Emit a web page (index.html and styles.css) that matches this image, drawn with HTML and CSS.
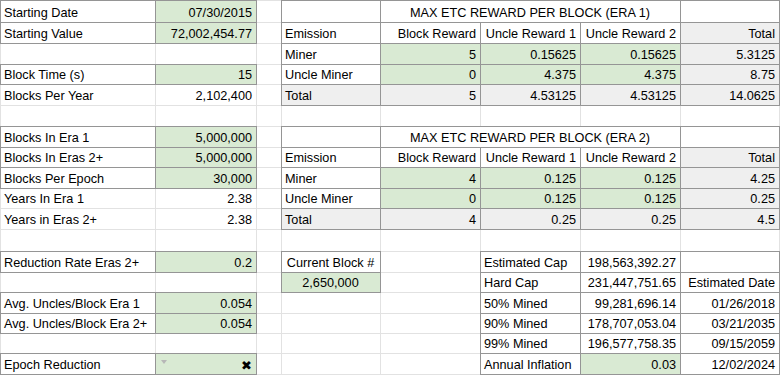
FILE: index.html
```html
<!DOCTYPE html>
<html>
<head>
<meta charset="utf-8">
<link rel="stylesheet" href="styles.css">
</head>
<body>
<div class="sheet">
  <!-- row 1 -->
  <div class="c b">Starting Date</div>
  <div class="c b g r">07/30/2015</div>
  <div class="c"></div>
  <div class="c b"></div>
  <div class="c b title">MAX ETC REWARD PER BLOCK (ERA 1)</div>
  <div class="c b"></div>
  <!-- row 2 -->
  <div class="c b">Starting Value</div>
  <div class="c b g r">72,002,454.77</div>
  <div class="c"></div>
  <div class="c b">Emission</div>
  <div class="c b r">Block Reward</div>
  <div class="c b r">Uncle Reward 1</div>
  <div class="c b r">Uncle Reward 2</div>
  <div class="c b k r">Total</div>
  <!-- row 3 -->
  <div class="c"></div>
  <div class="c"></div>
  <div class="c"></div>
  <div class="c b">Miner</div>
  <div class="c b g r">5</div>
  <div class="c b g r">0.15625</div>
  <div class="c b g r">0.15625</div>
  <div class="c b k r">5.3125</div>
  <!-- row 4 -->
  <div class="c b">Block Time (s)</div>
  <div class="c b g r">15</div>
  <div class="c"></div>
  <div class="c b">Uncle Miner</div>
  <div class="c b g r">0</div>
  <div class="c b g r">4.375</div>
  <div class="c b g r">4.375</div>
  <div class="c b k r">8.75</div>
  <!-- row 5 -->
  <div class="c">Blocks Per Year</div>
  <div class="c r">2,102,400</div>
  <div class="c"></div>
  <div class="c b k">Total</div>
  <div class="c b k r">5</div>
  <div class="c b k r">4.53125</div>
  <div class="c b k r">4.53125</div>
  <div class="c b k r">14.0625</div>
  <!-- row 6 -->
  <div class="c"></div>
  <div class="c"></div>
  <div class="c"></div>
  <div class="c"></div>
  <div class="c"></div>
  <div class="c"></div>
  <div class="c"></div>
  <div class="c"></div>
  <!-- row 7 -->
  <div class="c b">Blocks In Era 1</div>
  <div class="c b g r">5,000,000</div>
  <div class="c"></div>
  <div class="c b"></div>
  <div class="c b title">MAX ETC REWARD PER BLOCK (ERA 2)</div>
  <div class="c b"></div>
  <!-- row 8 -->
  <div class="c b">Blocks In Eras 2+</div>
  <div class="c b g r">5,000,000</div>
  <div class="c"></div>
  <div class="c b">Emission</div>
  <div class="c b r">Block Reward</div>
  <div class="c b r">Uncle Reward 1</div>
  <div class="c b r">Uncle Reward 2</div>
  <div class="c b k r">Total</div>
  <!-- row 9 -->
  <div class="c b">Blocks Per Epoch</div>
  <div class="c b g r">30,000</div>
  <div class="c"></div>
  <div class="c b">Miner</div>
  <div class="c b g r">4</div>
  <div class="c b g r">0.125</div>
  <div class="c b g r">0.125</div>
  <div class="c b k r">4.25</div>
  <!-- row 10 -->
  <div class="c">Years In Era 1</div>
  <div class="c r">2.38</div>
  <div class="c"></div>
  <div class="c b">Uncle Miner</div>
  <div class="c b g r">0</div>
  <div class="c b g r">0.125</div>
  <div class="c b g r">0.125</div>
  <div class="c b k r">0.25</div>
  <!-- row 11 -->
  <div class="c">Years in Eras 2+</div>
  <div class="c r">2.38</div>
  <div class="c"></div>
  <div class="c b k">Total</div>
  <div class="c b k r">4</div>
  <div class="c b k r">0.25</div>
  <div class="c b k r">0.25</div>
  <div class="c b k r">4.5</div>
  <!-- row 12 -->
  <div class="c"></div>
  <div class="c"></div>
  <div class="c"></div>
  <div class="c"></div>
  <div class="c"></div>
  <div class="c"></div>
  <div class="c"></div>
  <div class="c"></div>
  <!-- row 13 -->
  <div class="c b">Reduction Rate Eras 2+</div>
  <div class="c b g r">0.2</div>
  <div class="c"></div>
  <div class="c b m">Current Block #</div>
  <div class="c"></div>
  <div class="c b">Estimated Cap</div>
  <div class="c b r">198,563,392.27</div>
  <div class="c b"></div>
  <!-- row 14 -->
  <div class="c"></div>
  <div class="c"></div>
  <div class="c"></div>
  <div class="c b g m">2,650,000</div>
  <div class="c"></div>
  <div class="c b">Hard Cap</div>
  <div class="c b r">231,447,751.65</div>
  <div class="c b r">Estimated Date</div>
  <!-- row 15 -->
  <div class="c b">Avg. Uncles/Block Era 1</div>
  <div class="c b g r">0.054</div>
  <div class="c"></div>
  <div class="c"></div>
  <div class="c"></div>
  <div class="c b">50% Mined</div>
  <div class="c b r">99,281,696.14</div>
  <div class="c b r">01/26/2018</div>
  <!-- row 16 -->
  <div class="c b">Avg. Uncles/Block Era 2+</div>
  <div class="c b g r">0.054</div>
  <div class="c"></div>
  <div class="c"></div>
  <div class="c"></div>
  <div class="c b">90% Mined</div>
  <div class="c b r">178,707,053.04</div>
  <div class="c b r">03/21/2035</div>
  <!-- row 17 -->
  <div class="c"></div>
  <div class="c"></div>
  <div class="c"></div>
  <div class="c"></div>
  <div class="c"></div>
  <div class="c b">99% Mined</div>
  <div class="c b r">196,577,758.35</div>
  <div class="c b r">09/15/2059</div>
  <!-- row 18 -->
  <div class="c b">Epoch Reduction</div>
  <div class="c b g drop">
    <svg class="caret" width="6" height="4" viewBox="0 0 6 4"><polygon points="0,0 6,0 3,4" fill="#b7b7b7"/></svg>
    <span class="cross">✖</span>
  </div>
  <div class="c"></div>
  <div class="c"></div>
  <div class="c"></div>
  <div class="c b">Annual Inflation</div>
  <div class="c b g r">0.03</div>
  <div class="c b r">12/02/2024</div>
</div>
</body>
</html>
```

FILE: styles.css
```css
html, body {
  margin: 0;
  padding: 0;
  background: #ffffff;
}

.sheet {
  display: grid;
  grid-template-columns: 154px 100px 24px 98px 99px 99px 99px 98px;
  grid-template-rows: 21px 20px 20px 19px 20px 20px 20px 19px 20px 19px 20px 21px 20px 19px 20px 19px 19px 20px;
  gap: 1px;
  padding: 1px;
  width: 780px;
  height: 375px;
  box-sizing: border-box;
  background: #e2e2e2;
  font-family: "Liberation Sans", Arial, sans-serif;
  font-size: 12.7px;
  color: #000;
  overflow: hidden;
}

.c {
  background: #ffffff;
  display: flex;
  align-items: flex-end;
  justify-content: flex-start;
  padding: 0 4px 2px 3px;
  line-height: 14px;
  white-space: nowrap;
  overflow: hidden;
  min-width: 0;
}

.b {
  outline: 1px solid #959595;
}

.g {
  background: #d9ead3;
}

.k {
  background: #efefef;
}

.r {
  justify-content: flex-end;
}

.m {
  justify-content: center;
}

.title {
  grid-column: span 3;
  justify-content: center;
}

.drop {
  justify-content: space-between;
  align-items: center;
  padding: 0 4px 0 3px;
}

.caret {
  display: block;
  margin-left: 2px;
  margin-top: -4px;
}

.cross {
  font-family: "DejaVu Sans", sans-serif;
  font-size: 13px;
  line-height: 13px;
  margin-top: 3px;
}
```
